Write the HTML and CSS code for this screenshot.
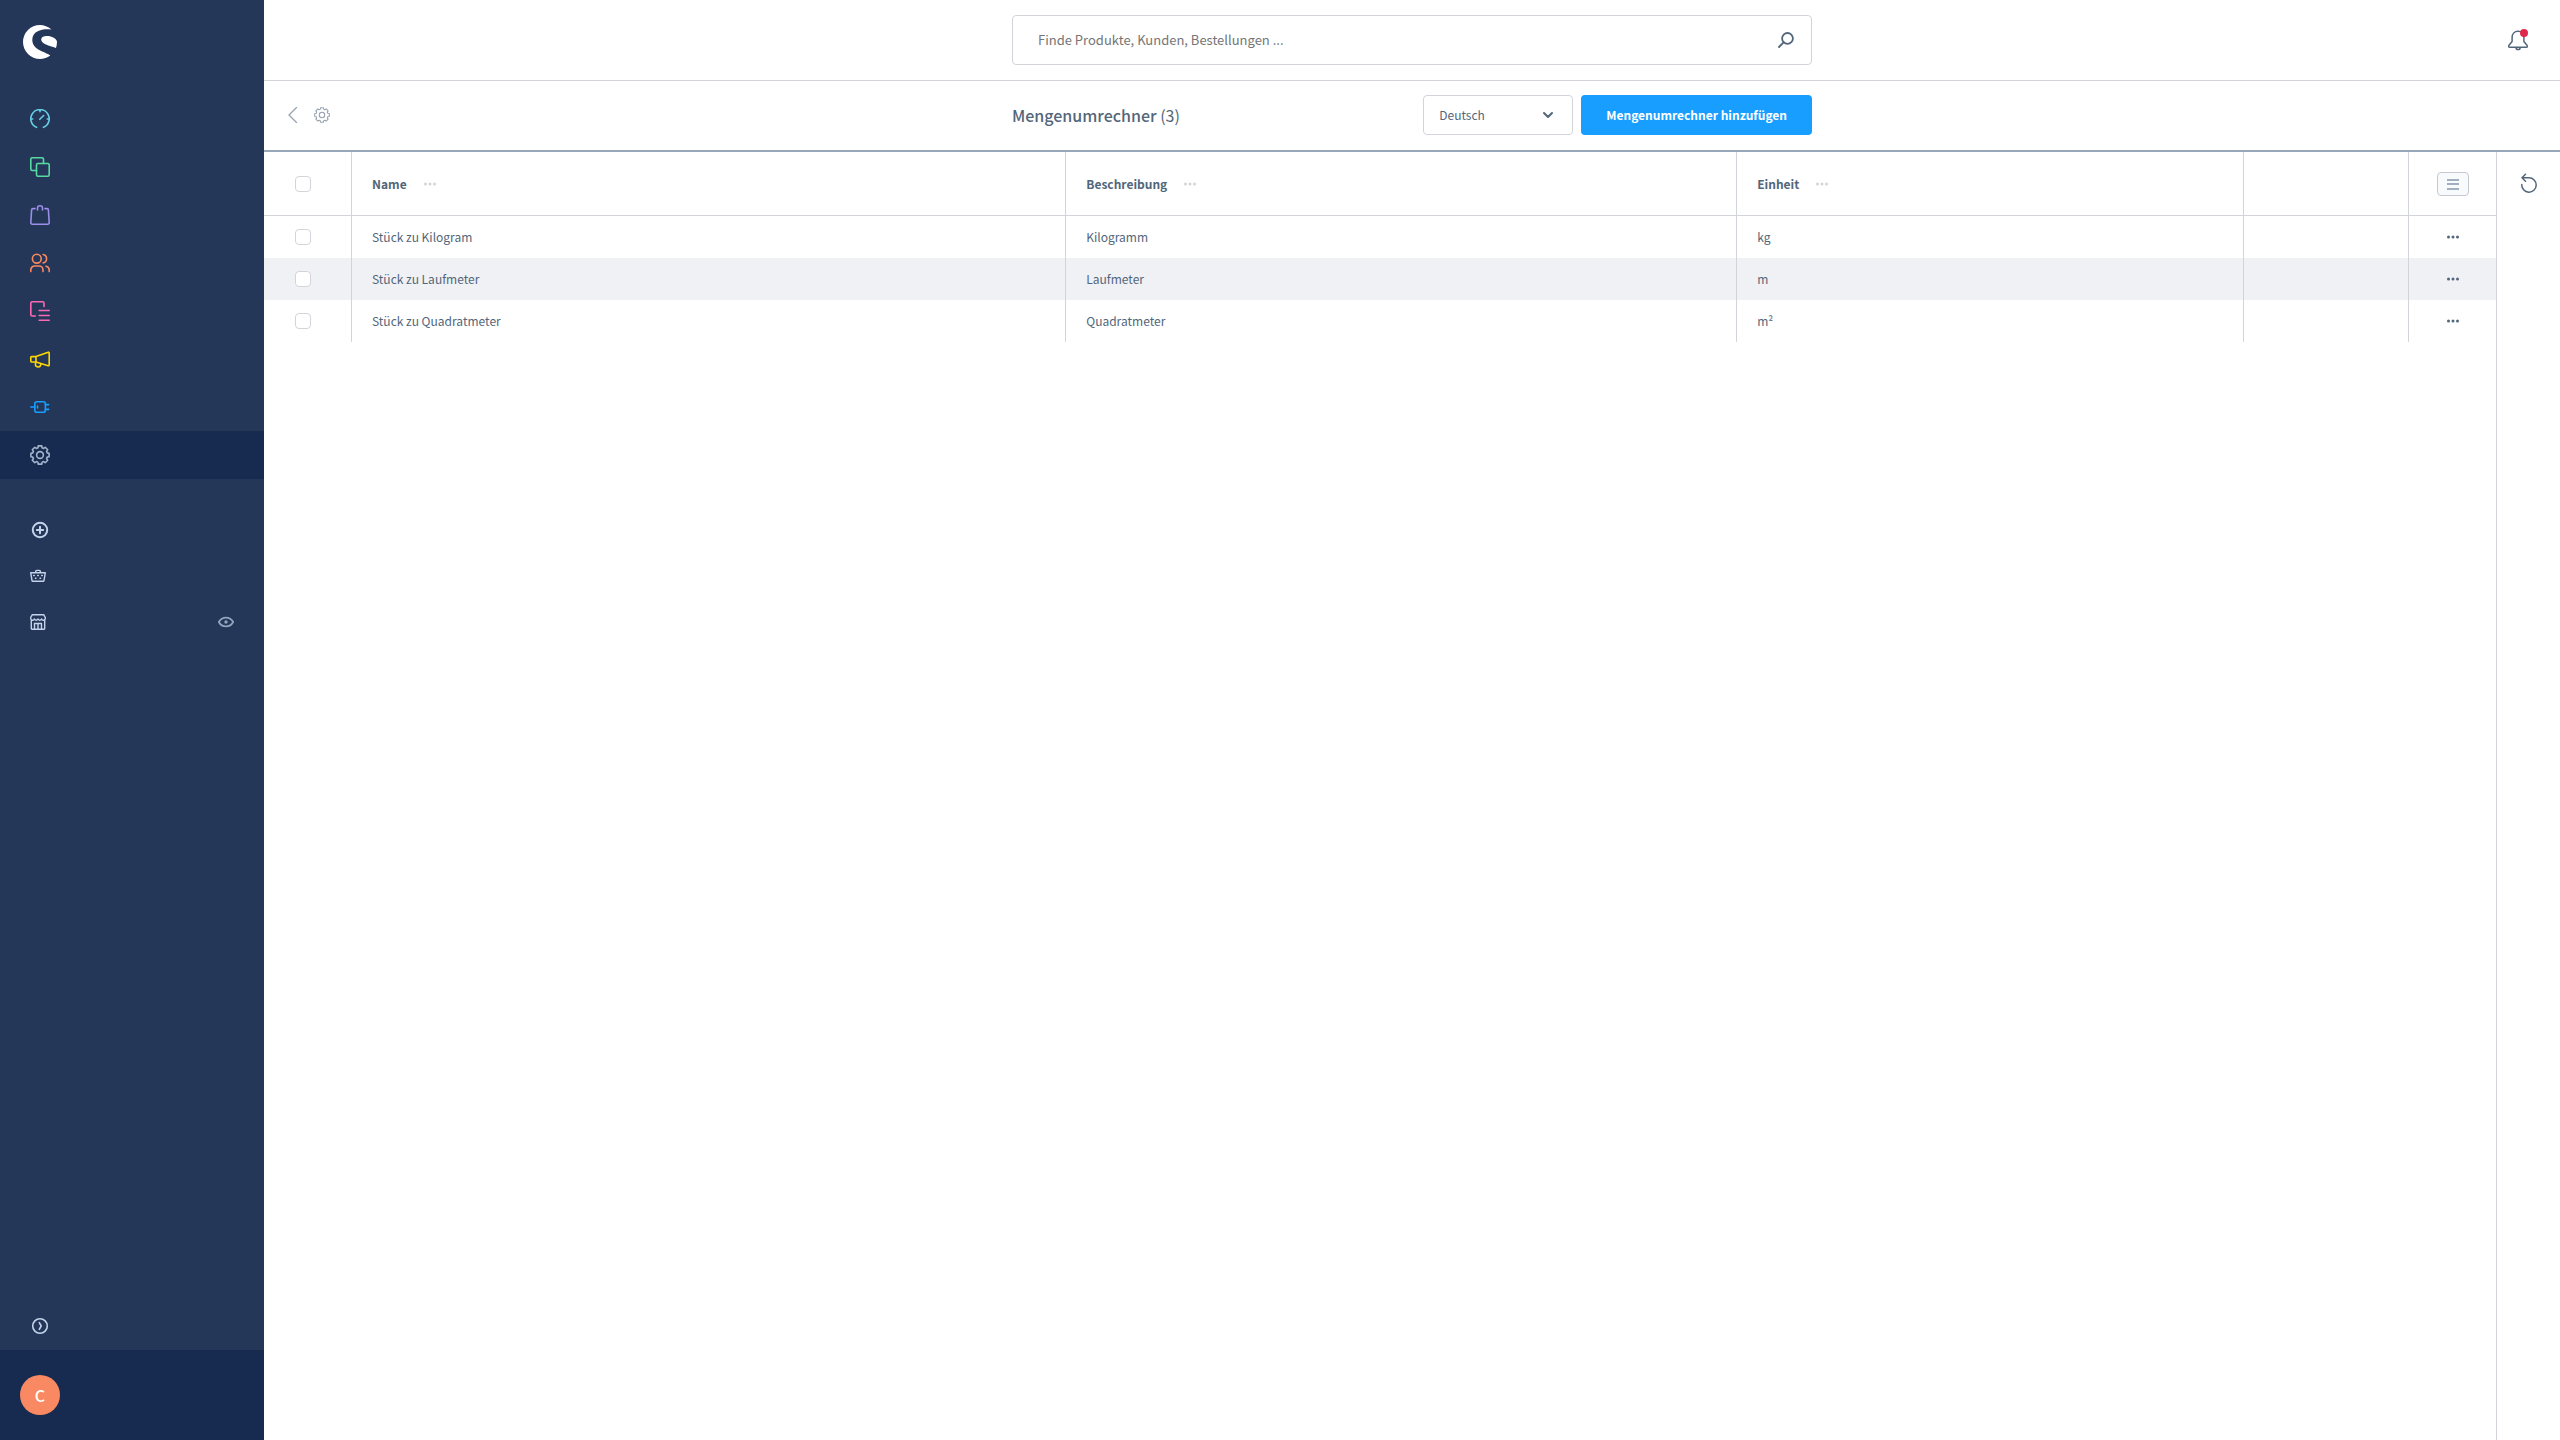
FILE: index.html
```html
<!DOCTYPE html>
<html lang="de">
<head>
<meta charset="utf-8">
<meta name="viewport" content="width=device-width, initial-scale=1">
<title>Mengenumrechner</title>
<link rel="stylesheet" href="styles.css">
</head>
<body>
<svg class="sprite" aria-hidden="true">
  <symbol id="cog" viewBox="-10 -10 20 20">
    <path d="M-2.1-7.2-1.8-9.1H1.8L2.1-7.2 3.6-6.6 5.2-7.7 7.7-5.2 6.6-3.6 7.2-2.1 9.1-1.8V1.8L7.2 2.1 6.6 3.6 7.7 5.2 5.2 7.7 3.6 6.6 2.1 7.2 1.8 9.1H-1.8L-2.1 7.2-3.6 6.6-5.2 7.7-7.7 5.2-6.6 3.6-7.2 2.1-9.1 1.8V-1.8L-7.2-2.1-6.6-3.6-7.7-5.2-5.2-7.7-3.6-6.6Z"/>
    <circle r="3.4"/>
  </symbol>
  <symbol id="dots" viewBox="0 0 12 4">
    <circle cx="1.5" cy="2" r="1.5"/><circle cx="6" cy="2" r="1.5"/><circle cx="10.5" cy="2" r="1.5"/>
  </symbol>
</svg>
<div class="app">
  <aside class="sidebar">
    <a class="logo" href="#" aria-label="Startseite">
      <svg width="34" height="34" viewBox="0 0 34 34"><path d="M28.5 4.6C25 1.5 21 0 17 0a17 17 0 0 0 0 34c3.8 0 7.4-1.2 10.3-3.5C22 26.400 9.300 25 9.300 15 9.300 4.500 22 3.600 28.500 4.600Z"/><path d="M18.200 14.500C18.200 12 21 11 24 11c5 0 9.500 2.600 10 5.500 0 2.400-.3 4.500-1 6.500-4-1.500-7-2.200-10-3.600-3-1.400-4.800-2.500-4.800-4.900Z"/></svg>
    </a>
    <nav class="nav" aria-label="Hauptmenü">
      <a class="nav-link cyan" href="#" aria-label="Dashboard"><svg class="icon" viewBox="0 0 20 20"><path d="M6.600 18.300A9.200 9.200 0 1 1 13.400 18.300M10 .8V2.700M.8 10H2.700M17.300 10H19.200M9.800 10.300 13.600 6.500"/></svg></a>
      <a class="nav-link green" href="#" aria-label="Kataloge"><svg class="icon" viewBox="0 0 20 20"><path d="M6.500 13.500H2.200A1.400 1.400 0 0 1 .8 12.100V2.200A1.400 1.400 0 0 1 2.200.8H12.100A1.400 1.400 0 0 1 13.500 2.200V6.500"/><rect x="6.500" y="6.500" width="12.700" height="12.700" rx="1.400"/></svg></a>
      <a class="nav-link violet" href="#" aria-label="Bestellungen"><svg class="icon" viewBox="0 0 20 20"><path d="M5 3.600H3A1.400 1.400 0 0 0 1.600 5L.8 17.700a1.400 1.400 0 0 0 1.400 1.500H17.800a1.400 1.400 0 0 0 1.400-1.500L18.400 5A1.400 1.400 0 0 0 17 3.600H15M7.500 5V3a2.300 2.300 0 0 1 2.300-2.200h.4A2.300 2.300 0 0 1 12.500 3V5"/></svg></a>
      <a class="nav-link orange" href="#" aria-label="Kunden"><svg class="icon" viewBox="0 0 20 20"><circle cx="6.800" cy="5.700" r="4.400"/><path d="M.8 18.600V17a4 4 0 0 1 4-4H9a4 4 0 0 1 4 4V18.600M13.200 1.500a4.300 4.300 0 0 1 0 8.400M16 13.200a4 4 0 0 1 3.200 3.900V18.600"/></svg></a>
      <a class="nav-link pink" href="#" aria-label="Inhalte"><svg class="icon" viewBox="0 0 20 20"><path d="M5.300 15H2.200A1.400 1.400 0 0 1 .8 13.600V2.200A1.400 1.400 0 0 1 2.200.8H12.600A1.400 1.400 0 0 1 14 2.200V5.500M9.200 9.500H19.200M9.200 14.500H19.200M9.200 19.200H19.200"/></svg></a>
      <a class="nav-link yellow" href="#" aria-label="Marketing"><svg class="icon" viewBox="0 0 20 20"><path d="M6 7.600 18.200 3.200a.8.8 0 0 1 1 .7V15.900a.8.800 0 0 1-1 .8L6 13ZM6 7.600H1.500a.7.7 0 0 0-.7.700V12.300a.7.700 0 0 0 .7.700H6M5.500 13.300V15a2.600 2.600 0 0 0 5.200.6V14.600"/></svg></a>
      <a class="nav-link blue" href="#" aria-label="Erweiterungen"><svg class="icon" viewBox="0 0 20 20"><rect x="4.800" y="4.700" width="10.600" height="10.600" rx="2"/><path d="M.8 10H4.800M7.500 9V11M15.400 7.600H18.600M15.400 12.400H18.600"/></svg></a>
      <a class="nav-link slate active" href="#" aria-label="Einstellungen" aria-current="page"><svg class="icon"><use href="#cog"/></svg></a>
    </nav>
    <nav class="nav secondary" aria-label="Verkaufskanäle">
      <a class="nav-link" href="#" aria-label="Verkaufskanal hinzufügen"><svg class="icon bold" viewBox="0 0 20 20"><circle cx="10" cy="10" r="7.200"/><path d="M10 6.800V13.200M6.800 10H13.200"/></svg></a>
      <a class="nav-link" href="#" aria-label="Headless"><svg class="icon small" viewBox="0 0 16 16"><path d="M.7 4.700H15.300L14 12.600a.9.900 0 0 1-.9.700H2.900a.9.900 0 0 1-.9-.7ZM5.600 4.500V3.700A1.300 1.300 0 0 1 6.900 2.400H9.100a1.300 1.300 0 0 1 1.300 1.300V4.500"/><path d="M3.700 7.500h.6M7.700 7.500h.6M11.700 7.500h.6M5.400 10.300H6M10 10.300h.6"/></svg></a>
      <a class="nav-link" href="#" aria-label="Storefront"><svg class="icon small" viewBox="0 0 16 16"><path d="M1.300 6V14.600a.7.700 0 0 0 .7.700H14a.7.700 0 0 0 .7-.7V6M2.300.7H13.700L15.300 3.500V4.600a1.900 1.900 0 0 1-3.700.3 1.900 1.900 0 0 1-3.600 0 1.900 1.900 0 0 1-3.600 0A1.900 1.900 0 0 1 .7 4.600V3.500ZM4.500 15.300V9.500H11.500V15.300M8 9.500V15.300"/></svg><svg class="icon small eye" viewBox="0 0 16 16"><path d="M.8 8C2.500 5 5 3.600 8 3.600S13.500 5 15.200 8C13.500 11 11 12.400 8 12.400S2.500 11 .8 8Z"/><circle cx="8" cy="8" r=".8"/></svg></a>
    </nav>
    <button class="nav-link collapse" type="button" aria-label="Menü ausklappen"><svg class="icon" viewBox="0 0 20 20"><circle cx="10" cy="10" r="7.300"/><path d="M9.300 6.700 11.200 10 9.300 13.300"/></svg></button>
    <div class="user"><button class="avatar" type="button">C</button></div>
  </aside>

  <div class="page">
    <header class="topbar">
      <form class="search" role="search">
        <input type="search" aria-label="Suche" placeholder="Finde Produkte, Kunden, Bestellungen ...">
        <button type="button" class="plain" aria-label="Suchen"><svg class="search-icon" viewBox="0 0 16 16"><circle cx="9.500" cy="6.400" r="5.400"/><path d="M5.600 10.300 1 15"/></svg></button>
      </form>
      <button type="button" class="plain bell" aria-label="Benachrichtigungen"><svg width="20" height="22" viewBox="0 0 20 22"><path d="M4.100 8.500C4.100 4.800 6.500 2.200 10 2.200S15.900 4.800 15.900 8.500V12.600L19.200 16.500A1 1 0 0 1 18.400 18.200H1.600A1 1 0 0 1 .8 16.500L4.100 12.600ZM8 18.400a2.100 2.100 0 0 0 4.200 0"/><circle class="badge" cx="16" cy="4" r="4"/></svg></button>
    </header>

    <div class="smartbar">
      <div class="smartbar-nav">
        <a href="#" aria-label="Zurück"><svg width="10" height="16" viewBox="0 0 10 16"><path d="M8.500.5 1 8 8.500 15.500"/></svg></a>
        <a href="#" aria-label="Einstellungen"><svg width="16" height="16"><use href="#cog"/></svg></a>
      </div>
      <div class="smartbar-main">
        <h1>Mengenumrechner <span>(3)</span></h1>
        <div class="language">
          <select aria-label="Sprache"><option>Deutsch</option></select>
          <svg width="12" height="8" viewBox="0 0 12 8"><path d="M2 2 6 6 10 2"/></svg>
        </div>
        <button type="button" class="primary">Mengenumrechner hinzufügen</button>
      </div>
    </div>

    <div class="content">
      <main class="listing">
        <table>
          <colgroup><col class="col-tool"><col class="col-name"><col class="col-description"><col class="col-unit"><col><col class="col-actions"></colgroup>
          <thead>
            <tr>
              <th class="tool"><input type="checkbox" aria-label="Alle auswählen"></th>
              <th scope="col"><div class="head">Name <button type="button" class="plain" aria-label="Spalte Name"><svg class="dots"><use href="#dots"/></svg></button></div></th>
              <th scope="col"><div class="head">Beschreibung <button type="button" class="plain" aria-label="Spalte Beschreibung"><svg class="dots"><use href="#dots"/></svg></button></div></th>
              <th scope="col"><div class="head">Einheit <button type="button" class="plain" aria-label="Spalte Einheit"><svg class="dots"><use href="#dots"/></svg></button></div></th>
              <th></th>
              <th class="tool"><button type="button" class="settings" aria-label="Listeneinstellungen"><svg width="12" height="12" viewBox="0 0 12 12"><path d="M0 2H12M0 6H12M0 11H12"/></svg></button></th>
            </tr>
          </thead>
          <tbody>
            <tr>
              <td class="tool"><input type="checkbox" aria-label="Stück zu Kilogram auswählen"></td>
              <td>Stück zu Kilogram</td><td>Kilogramm</td><td>kg</td><td></td>
              <td class="tool"><button type="button" class="plain" aria-label="Aktionen"><svg class="dots"><use href="#dots"/></svg></button></td>
            </tr>
            <tr class="highlight">
              <td class="tool"><input type="checkbox" aria-label="Stück zu Laufmeter auswählen"></td>
              <td>Stück zu Laufmeter</td><td>Laufmeter</td><td>m</td><td></td>
              <td class="tool"><button type="button" class="plain" aria-label="Aktionen"><svg class="dots"><use href="#dots"/></svg></button></td>
            </tr>
            <tr>
              <td class="tool"><input type="checkbox" aria-label="Stück zu Quadratmeter auswählen"></td>
              <td>Stück zu Quadratmeter</td><td>Quadratmeter</td><td>m²</td><td></td>
              <td class="tool"><button type="button" class="plain" aria-label="Aktionen"><svg class="dots"><use href="#dots"/></svg></button></td>
            </tr>
          </tbody>
        </table>
      </main>
      <aside class="tools">
        <button type="button" class="plain" aria-label="Aktualisieren"><svg width="18" height="20" viewBox="0 0 18 20"><path d="M1.800 11.500A7.200 7.200 0 1 0 9 4.800H2.500M5.500 1.200 2 4.800 5.500 8.200"/></svg></button>
      </aside>
    </div>
  </div>
</div>
</body>
</html>
```
FILE: styles.css
```css
* {
  box-sizing: border-box;
}

body {
  margin: 0;
  background: #fff;
  color: #52667a;
  font-family: "Source Sans Pro", "Noto Sans CJK SC", "Noto Sans", sans-serif;
  font-size: 12px;
  line-height: 20px;
}

button,
input,
select {
  margin: 0;
  color: inherit;
  font: inherit;
}

button {
  cursor: pointer;
}

svg {
  display: block;
  flex: none;
  fill: none;
  stroke: currentColor;
  stroke-linecap: round;
  stroke-linejoin: round;
}

.sprite {
  position: absolute;
  width: 0;
  height: 0;
}

.plain {
  display: inline-flex;
  padding: 0;
  border: 0;
  background: none;
}

.app {
  display: flex;
  min-height: 100vh;
}

/* Sidebar */

.sidebar {
  display: flex;
  flex: none;
  flex-direction: column;
  width: 264px;
  background: #243758;
  color: #c3d3ec;
}

.logo {
  padding: 25px 23px 36px;
  color: #fff;
}

.logo svg {
  fill: currentColor;
  stroke: none;
}

.nav {
  display: flex;
  flex-direction: column;
}

.nav-link {
  display: flex;
  align-items: center;
  justify-content: space-between;
  height: 48px;
  padding: 0 30px;
  border: 0;
  background: none;
  color: inherit;
}

.nav-link.active {
  background: #172a50;
}

.secondary {
  margin-top: 28px;
}

.secondary .nav-link {
  height: 46px;
}

.icon {
  width: 20px;
  height: 20px;
  stroke-width: 1.6;
}

.icon.bold {
  stroke-width: 2;
}

.icon.small {
  width: 16px;
  height: 16px;
  stroke-width: 1.4;
}

.icon.eye {
  color: #92a4be;
  stroke-width: 1.8;
}

.cyan { color: #66cde4; }
.green { color: #57d9a3; }
.violet { color: #9b8ee8; }
.orange { color: #f88962; }
.pink { color: #ff68b4; }
.yellow { color: #ffd700; }
.blue { color: #189eff; }
.slate { color: #a3b4cb; }

.collapse {
  margin-top: auto;
}

.user {
  padding: 25px 20px;
  background: #172a50;
}

.avatar {
  display: block;
  width: 40px;
  height: 40px;
  padding: 0;
  border: 0;
  border-radius: 50%;
  background: #f88962;
  color: #fff;
  font-size: 16px;
  font-weight: 500;
}

/* Top bar */

.page {
  display: flex;
  flex: 1;
  flex-direction: column;
  min-width: 0;
}

.topbar,
.smartbar {
  display: grid;
  grid-template-columns: 1fr minmax(0, 800px) 1fr;
  align-items: center;
}

.topbar {
  padding: 15px 0;
  border-bottom: 1px solid #d1d5da;
}

.search {
  display: flex;
  grid-column: 2;
  align-items: center;
  height: 50px;
  padding: 0 17px 0 25px;
  border: 1px solid #d1d5da;
  border-radius: 4px;
}

.search input {
  flex: 1;
  min-width: 0;
  padding: 0;
  border: 0;
  outline: 0;
  background: none;
  font-size: 13px;
}

.search input::placeholder {
  color: #757575;
}

.search-icon {
  width: 16px;
  height: 16px;
  stroke-width: 1.8;
}

.bell {
  justify-self: end;
  margin-right: 32px;
}

.bell svg {
  stroke-width: 1.5;
}

.bell .badge {
  fill: #de294c;
  stroke: none;
}

/* Title bar */

.smartbar {
  padding: 14px 0 15px;
  border-bottom: 2px solid #98a8b8;
}

.smartbar-nav {
  display: flex;
  gap: 16px;
  padding-left: 24px;
}

.smartbar-nav a {
  color: #96a2ae;
}

.smartbar-nav svg {
  stroke-width: 1.3;
}

.smartbar-main {
  display: flex;
  align-items: center;
}

h1 {
  flex: 1;
  margin: 0;
  font-size: 16px;
  font-weight: 500;
}

h1 span {
  font-weight: 400;
}

.language {
  display: grid;
  align-items: center;
  width: 150px;
  margin-right: 8px;
}

.language select,
.language svg {
  grid-area: 1 / 1;
}

.language select {
  width: 100%;
  height: 40px;
  padding: 0 15px;
  border: 1px solid #d1d5da;
  border-radius: 4px;
  appearance: none;
  background: #fff;
}

.language svg {
  justify-self: end;
  margin-right: 19px;
  pointer-events: none;
  stroke-width: 2;
}

.primary {
  height: 40px;
  padding: 0 25px;
  border: 0;
  border-radius: 4px;
  background: #189eff;
  color: #fff;
  font-weight: 700;
}

/* Listing */

.content {
  display: flex;
  flex: 1;
}

.listing {
  flex: 1;
  min-width: 0;
}

table {
  width: 100%;
  border-collapse: separate;
  border-spacing: 0;
  table-layout: fixed;
}

.col-tool { width: 88px; }
.col-actions { width: 87px; }
.col-name { width: 32%; }
.col-description { width: 30.06%; }
.col-unit { width: 22.7%; }

th,
td {
  height: 42px;
  padding: 0 20px;
  border-right: 1px solid #d1d5da;
  text-align: left;
}

th {
  height: 64px;
  border-bottom: 1px solid #d1d5da;
  font-weight: 700;
}

th:last-child,
td:last-child {
  border-right: 0;
}

.highlight {
  background: #f0f1f5;
}

.head {
  display: flex;
  align-items: center;
  gap: 17px;
}

.dots {
  width: 12px;
  height: 4px;
  fill: currentColor;
  stroke: none;
}

.head .plain {
  color: #d1d5da;
}

.tool button,
.tool input {
  margin: 0 auto;
}

.tool button {
  display: flex;
}

.tool input {
  display: block;
  width: 16px;
  height: 16px;
  margin-left: 11px;
  border: 1px solid #d1d5da;
  border-radius: 4px;
  appearance: none;
  background: #fff;
}

.settings {
  align-items: center;
  justify-content: center;
  width: 32px;
  height: 24px;
  padding: 0;
  border: 1px solid #c3c9d1;
  border-radius: 4px;
  background: #f9fafb;
}

.settings svg {
  color: #8496aa;
  stroke-width: 1.5;
}

.tools {
  flex: none;
  width: 64px;
  padding: 21px 23px;
  border-left: 1px solid #d1d5da;
}

.tools svg {
  stroke-width: 1.5;
}
```
